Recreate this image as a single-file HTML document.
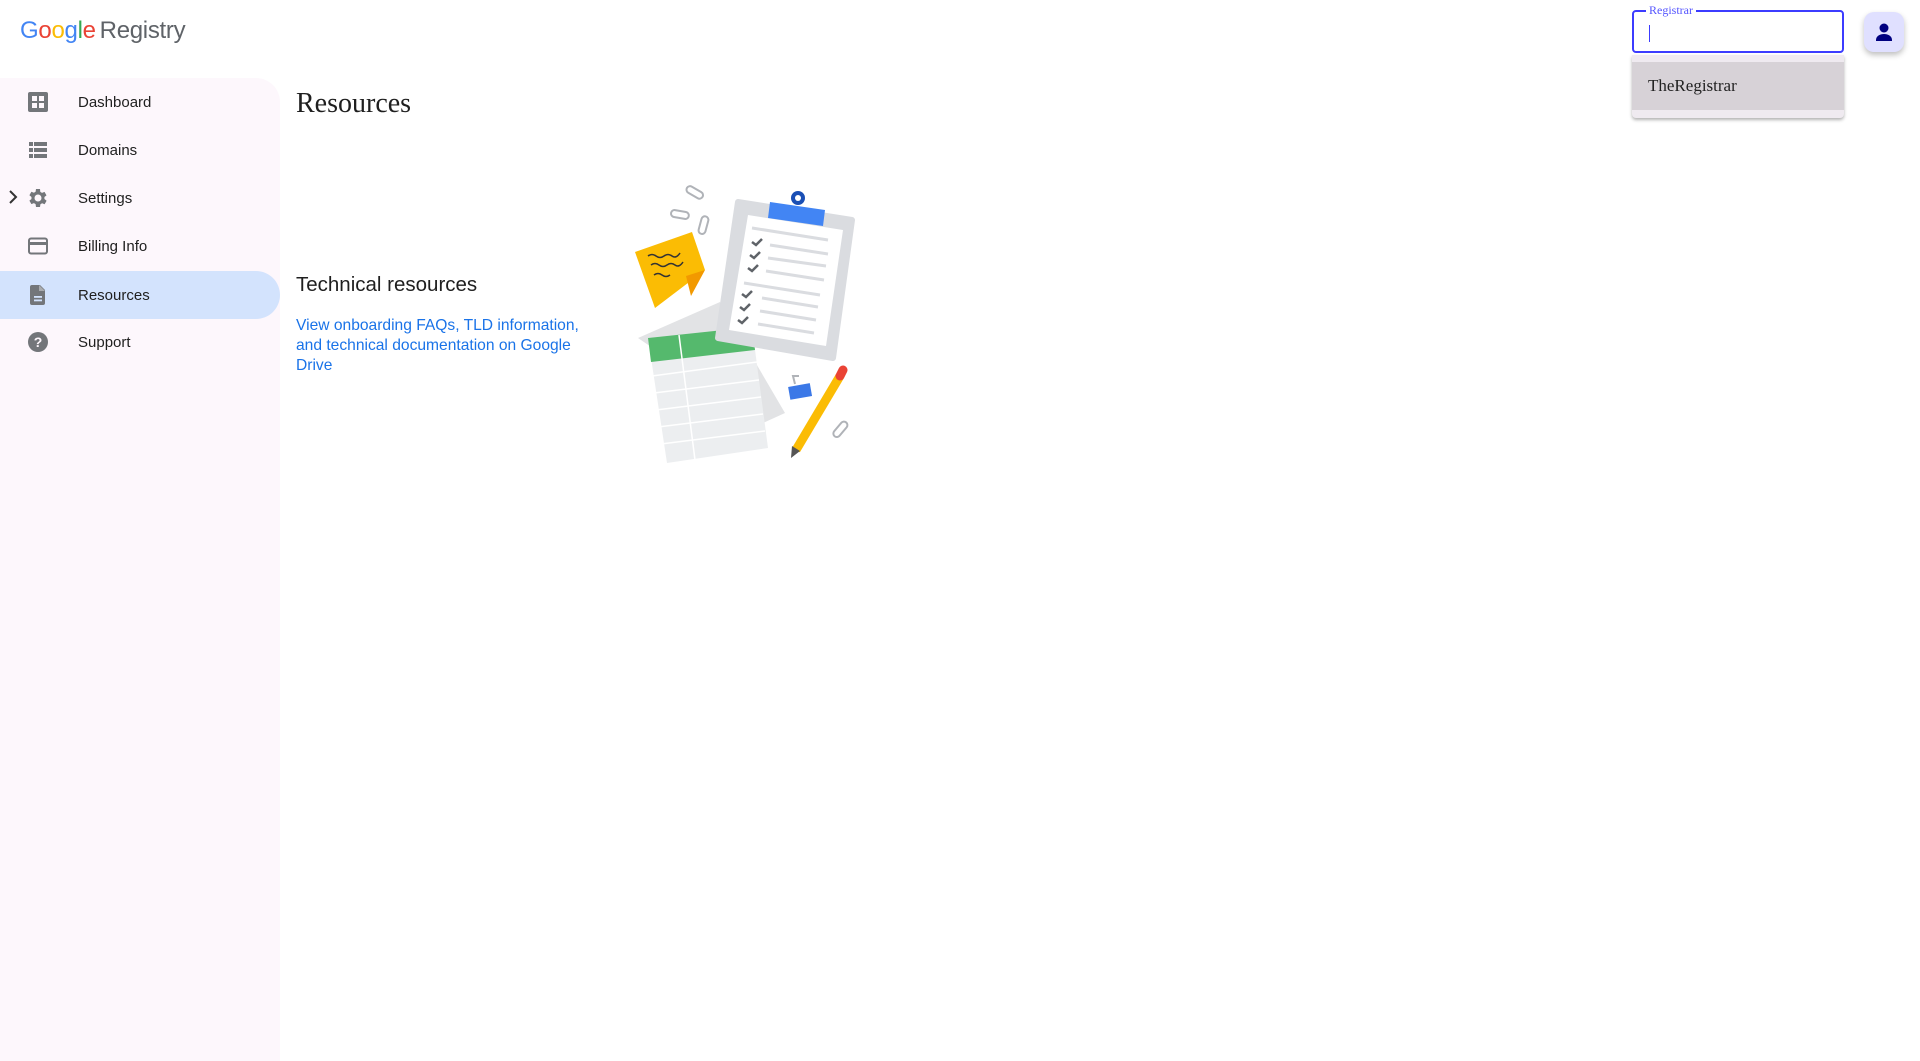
<!DOCTYPE html>
<html><head><meta charset="utf-8"><style>
*{margin:0;padding:0;box-sizing:border-box}
body{width:1920px;height:1061px;background:#fff;position:relative;overflow:hidden;font-family:"Liberation Sans",Arial,sans-serif;color:#1f1f1f}
.logo{position:absolute;left:20px;top:17px;font-size:24px;letter-spacing:-0.3px}
.logo .r{color:#5f6368;margin-left:4px}
.side{position:absolute;left:0;top:78px;width:280px;height:983px;background:#fdf7fc;border-top-right-radius:24px}
.item{position:absolute;left:0;width:280px;height:48px;display:flex;align-items:center;font-size:15px;color:#1f1f1f}
.item .t{position:absolute;left:78px;top:16px}
.item svg{position:absolute;left:26px;top:12px}
.item.act{background:#d3e3fd;border-radius:0 24px 24px 0}
h1{position:absolute;left:296px;top:88px;font-family:"Liberation Serif",serif;font-weight:normal;font-size:28px;color:#1f1f1f}
.tech{position:absolute;left:296px;top:273px;font-size:20.5px;color:#1f1f1f}
.link{position:absolute;left:296px;top:316px;width:305px;font-size:15.6px;line-height:20px;color:#1a73e8}
.field{position:absolute;left:1632px;top:10px;width:212px;height:43px;border:2px solid #3c3cff;border-radius:4px;background:#fff}
.field .lab{position:absolute;left:12px;top:-9px;background:#fff;padding:0 3px;font-family:"Liberation Serif",serif;font-size:12px;color:#5454ff}
.field .cur{position:absolute;left:15px;top:13px;width:1px;height:17px;background:#3c3cff}
.dd{position:absolute;left:1632px;top:55px;width:212px;height:63px;background:#efeaf0;border-radius:0 0 4px 4px;box-shadow:0 2px 3px rgba(0,0,0,.3)}
.dd .opt{position:absolute;left:0;top:7px;width:212px;height:48px;background:#d7d2d7;font-family:"Liberation Serif",serif;font-size:17px;color:#222;padding:14px 16px}
.av{position:absolute;left:1864px;top:12px;width:40px;height:40px;background:#e0e0ff;border-radius:10px;box-shadow:0 3px 6px rgba(0,0,0,.25)}
</style></head><body>
<div class="logo"><span style="color:#4285f4">G</span><span style="color:#ea4335">o</span><span style="color:#fbbc05">o</span><span style="color:#4285f4">g</span><span style="color:#34a853">l</span><span style="color:#ea4335">e</span><span class="r">Registry</span></div>

<div class="side"></div>
<div class="item" style="top:78px"><svg width="24" height="24" viewBox="0 0 24 24"><rect x="2" y="2" width="20" height="20" rx="2" fill="#73767a"/><rect x="6" y="6" width="5" height="5" fill="#fdf7fc"/><rect x="13" y="6" width="5" height="5" fill="#fdf7fc"/><rect x="6" y="13" width="5" height="5" fill="#fdf7fc"/><rect x="13" y="13" width="5" height="5" fill="#fdf7fc"/></svg><span class="t">Dashboard</span></div>
<div class="item" style="top:126px"><svg width="24" height="24" viewBox="0 0 24 24" fill="#73767a"><rect x="3" y="4" width="4" height="4"/><rect x="8" y="4" width="13" height="4"/><rect x="3" y="10" width="4" height="4"/><rect x="8" y="10" width="13" height="4"/><rect x="3" y="16" width="4" height="4"/><rect x="8" y="16" width="13" height="4"/></svg><span class="t">Domains</span></div>
<div class="item" style="top:174px"><svg style="left:8px;top:16px" width="10" height="14" viewBox="0 0 10 14"><path d="M2 1l6 6-6 6" stroke="#333" stroke-width="2" fill="none"/></svg><svg width="24" height="24" viewBox="0 0 24 24"><path fill="#73767a" d="M19.4 13a7.5 7.5 0 000-2l2.1-1.6-2-3.5-2.5 1a7 7 0 00-1.7-1L15 3h-4l-.4 2.7a7 7 0 00-1.7 1l-2.5-1-2 3.5L6.5 11a7.5 7.5 0 000 2l-2.1 1.6 2 3.5 2.5-1a7 7 0 001.7 1L11 21h4l.4-2.7a7 7 0 001.7-1l2.5 1 2-3.5zM13 15.5a3.5 3.5 0 110-7 3.5 3.5 0 010 7z" transform="translate(-1 0)"/></svg><span class="t">Settings</span></div>
<div class="item" style="top:222px"><svg width="24" height="24" viewBox="0 0 24 24"><rect x="3" y="4.5" width="18" height="15" rx="2" fill="none" stroke="#73767a" stroke-width="2"/><rect x="3" y="8" width="18" height="3" fill="#73767a"/></svg><span class="t">Billing Info</span></div>
<div class="item act" style="top:271px"><svg width="24" height="24" viewBox="0 0 24 24"><path d="M6 2h8l5 5v13a2 2 0 01-2 2H6a2 2 0 01-2-2V4a2 2 0 012-2z" fill="#73767a"/><path d="M13 2v6h6" fill="#a9abae"/><rect x="8" y="13" width="8" height="1.8" fill="#d3e3fd"/><rect x="8" y="16.5" width="8" height="1.8" fill="#d3e3fd"/></svg><span class="t">Resources</span></div>
<div class="item" style="top:318px"><svg width="24" height="24" viewBox="0 0 24 24"><circle cx="12" cy="12" r="10" fill="#73767a"/><text x="12" y="17" text-anchor="middle" font-family="Liberation Sans" font-weight="bold" font-size="14" fill="#fdf7fc">?</text></svg><span class="t">Support</span></div>

<h1>Resources</h1>
<div class="tech">Technical resources</div>
<div class="link">View onboarding FAQs, TLD information, and technical documentation on Google Drive</div>

<svg style="position:absolute;left:0;top:0" width="1920" height="1061">
<polygon points="638,338 720,302 785,413 763,423" fill="#e2e3e5"/>
<polygon points="648,338 752,327 768,448 667,463" fill="#eceef0"/>
<polygon points="648,338 752,327 755,350 651,362" fill="#55b96d"/>
<g stroke="#fff" stroke-width="1.5"><line x1="679" y1="335" x2="695" y2="460"/><line x1="652" y1="376" x2="757" y2="362"/><line x1="654" y1="393" x2="759" y2="380"/><line x1="656" y1="410" x2="761" y2="397"/><line x1="658" y1="427" x2="763" y2="414"/><line x1="661" y1="444" x2="765" y2="431"/></g>
<polygon points="738,202 852,220 833,358 718,338" fill="#dadce0" stroke="#dadce0" stroke-width="6" stroke-linejoin="round"/>
<polygon points="748,215 843,230 826,346 729,330" fill="#fff"/>
<g stroke="#dadce0" stroke-width="3"><line x1="752" y1="228" x2="828" y2="240"/><line x1="770" y1="245" x2="828" y2="254"/><line x1="768" y1="258" x2="826" y2="266"/><line x1="766" y1="271" x2="824" y2="280"/><line x1="744" y1="283" x2="820" y2="295"/><line x1="762" y1="298" x2="818" y2="307"/><line x1="760" y1="311" x2="816" y2="320"/><line x1="758" y1="324" x2="814" y2="333"/></g>
<g stroke="#5f6368" stroke-width="2.5" fill="none"><path d="M752 242l4 3 6-6"/><path d="M750 255l4 3 6-6"/><path d="M748 268l4 3 6-6"/><path d="M742 294l4 3 6-6"/><path d="M740 307l4 3 6-6"/><path d="M738 320l4 3 6-6"/></g>
<circle cx="798" cy="198" r="7" fill="#1a4fb5"/><circle cx="798" cy="198" r="3" fill="#fff"/>
<polygon points="770,202 825,210 823,226 768,218" fill="#4285f4"/>
<polygon points="635,252 692,232 705,270 655,308" fill="#fbbc04"/>
<polygon points="705,270 686,276 691,296" fill="#f29900"/>
<g stroke="#333" stroke-width="1.5" fill="none"><path d="M648 256q4-3 8 0t8 0 8 0 8-3"/><path d="M651 265q4-3 8 0t8 0 8 0 8-3"/><path d="M654 275q4-3 8 0t8 0"/></g>
<line x1="796" y1="450" x2="840" y2="376" stroke="#fbbc04" stroke-width="9"/>
<line x1="840" y1="376" x2="843" y2="370" stroke="#ea4335" stroke-width="9" stroke-linecap="round"/>
<polygon points="791,458 792,446 800,451" fill="#555"/>
<rect x="789" y="385" width="22" height="13" fill="#3b78e7" transform="rotate(-10 800 391)"/>
<g stroke="#b0b3b8" stroke-width="2" fill="none"><rect x="686" y="189" width="18" height="7" rx="3.5" transform="rotate(30 695 192)"/><rect x="671" y="211" width="18" height="7" rx="3.5" transform="rotate(10 680 214)"/><rect x="700" y="216" width="7" height="18" rx="3.5" transform="rotate(15 703 225)"/><rect x="837" y="420" width="7" height="18" rx="3.5" transform="rotate(40 840 429)"/><path d="M795 384l-2-8 6 0"/></g>
</svg>

<div class="field"><span class="lab">Registrar</span><span class="cur"></span></div>
<div class="dd"><div class="opt">TheRegistrar</div></div>
<div class="av"><svg width="40" height="40" viewBox="0 0 40 40"><circle cx="20" cy="16" r="4.5" fill="#000080"/><path d="M12 28c0-4 4-6 8-6s8 2 8 6v1H12z" fill="#000080"/></svg></div>
</body></html>
